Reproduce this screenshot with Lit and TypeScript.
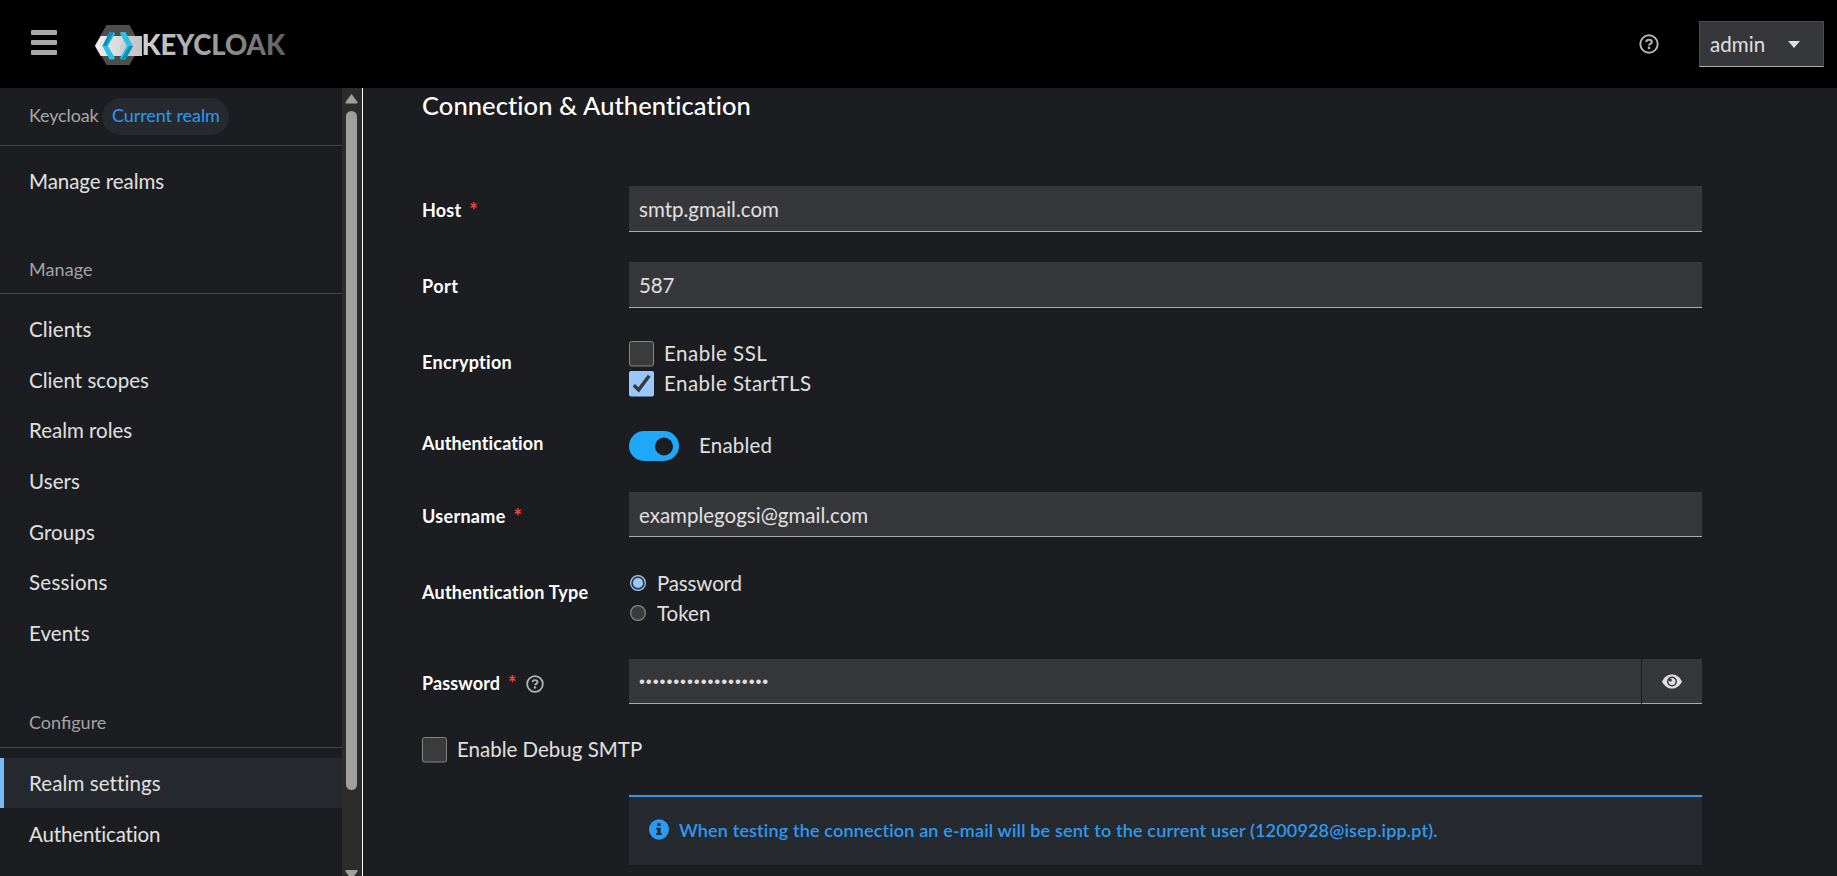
import { LitElement, html, svg, css, nothing } from 'lit';
import { customElement, property } from 'lit/decorators.js';
import { classMap } from 'lit/directives/class-map.js';

type Label = { text: string; track: number; active?: boolean };

const track = (n: number) => `letter-spacing:${n}px`;

const helpIcon = (size: number) => html`<svg width=${size} height=${size} viewBox="0 0 20 20">
  <circle cx="10" cy="10" r="8.7" fill="none" stroke="currentColor" stroke-width="2" />
  <path d="M7.200 8c.2-1.500 1.300-2.300 2.800-2.300 1.600 0 2.800.9 2.800 2.300 0 1.900-2.800 1.800-2.800 3.500" fill="none" stroke="currentColor" stroke-width="2.100" />
  <circle cx="10" cy="13.900" r="1.350" fill="currentColor" />
</svg>`;

@customElement('kc-masthead')
class Masthead extends LitElement {
  static styles = css`
    :host { display: flex; align-items: flex-start; height: 88px; background: #000; color: #e0e0e0; font-size: 20.5px; box-sizing: border-box; }
    .burger { display: flex; flex-direction: column; gap: 5px; width: 26px; padding: 30px 0 0; margin-left: 31px; }
    .burger i { height: 5px; background: #a9a9a9; border-radius: 1px; }
    .brand { display: flex; margin: 25px 0 0 38px; }
    .spacer { flex: 1; }
    .help { color: #b4b4b4; margin: 34px 40px 0 0; line-height: 0; }
    .user { display: flex; align-items: center; justify-content: space-between; width: 125px; height: 46px; margin: 21px 13px 0 0; padding: 0 23px 0 10px; box-sizing: border-box; background: #36373a; border: 1px solid #4a4b4e; border-bottom-color: #aaabac; }
    .user span:first-child { padding-bottom: 1px; }
    .caret { width: 0; height: 0; border: 6px solid transparent; border-top: 7px solid #e0e0e0; border-bottom: 0; }
    .word { font: 900 27.5px Lato, sans-serif; }
  `;
  render() {
    return html`
      <div class="burger"><i></i><i></i><i></i></div>
      <div class="brand">
        <svg width="192" height="40" viewBox="0 0 192 40">
          <defs>
            <linearGradient id="word" gradientUnits="userSpaceOnUse" x1="47" y1="0" x2="190" y2="0">
              <stop offset="0" stop-color="#d2d2d2" /><stop offset=".5" stop-color="#9c9c9c" /><stop offset="1" stop-color="#5e5e5e" />
            </linearGradient>
            <linearGradient id="band" x1="0" x2="1" y1="0" y2="0">
              <stop offset="0" stop-color="#efefef" /><stop offset="1" stop-color="#c6c6c6" />
            </linearGradient>
          </defs>
          <path d="M11.500 0h23L40.500 11 46 20 34.500 40h-23L0 20z" fill="#4d4d4d" />
          <path d="M5.700 11H47v20H5.700L0 21z" fill="url(#band)" />
          <path d="M25 21 31 11H47V23l-10 8H25z" fill="#bdbdbd" opacity=".35" />
          <path d="M14.500 7H19l1 1.500L13 21l7 12-1 1.500h-4.500L7.500 21z" fill="#2cc0e8" />
          <path d="M14.500 7H19L11.500 21h-4z" fill="#0992b8" />
          <path d="M26 7h4.500L38 21l-7.500 13.500H26L25 33l7-12-7-12.500z" fill="#2cc0e8" />
          <path d="M34 21h4l-7.500 13.500H26z" fill="#0992b8" />
          <text class="word" x="46.500" y="30.400" fill="url(#word)" textLength="143.500" lengthAdjust="spacing">KEYCLOAK</text>
        </svg>
      </div>
      <div class="spacer"></div>
      <div class="help">${helpIcon(20)}</div>
      <div class="user"><span style=${track(0.1)}>admin</span><span class="caret"></span></div>`;
  }
}

@customElement('kc-sidebar')
class Sidebar extends LitElement {
  static styles = css`
    :host { display: flex; width: 363px; height: 788px; overflow: hidden; box-sizing: border-box; border-right: 1px solid #fff; color: #e0e0e0; font-size: 20.5px; }
    nav { width: 342px; }
    .realm { display: flex; align-items: center; height: 58px; box-sizing: border-box; padding: 0 0 1px 29px; border-bottom: 1px solid #444548; font-size: 18px; color: #a8a8a8; }
    .pill { display: flex; align-items: center; height: 37px; width: 127px; box-sizing: border-box; padding: 0 0 3px 10px; margin-left: 3px; border-radius: 19px; background: #26292d; color: #2b9af3; white-space: nowrap; }
    .name { width: 70px; padding-bottom: 3px; }
    .group { display: flex; align-items: flex-end; box-sizing: border-box; border-bottom: 1px solid #444548; padding: 0 0 12px 29px; margin-bottom: 10px; line-height: 23px; font-size: 18px; color: #a3a3a3; height: 87px; }
    .group.lower { height: 89.300px; padding-bottom: 13px; }
    .item { display: flex; align-items: center; height: 50.700px; box-sizing: border-box; padding: 0 0 0 29px; }
    .item.active { height: 50px; margin-bottom: .700px; background: #26292d; border-left: 4px solid #73bcf7; padding-left: 25px; }
    .item.first { margin-top: 10px; padding-bottom: 1.500px; }
    .bar { width: 20px; background: #2c2c2c; display: flex; flex-direction: column; align-items: center; padding: 6px 1px 0 0; box-sizing: border-box; }
    .bar svg { flex: none; }
    .thumb { width: 11px; height: 679px; border-radius: 6px; background: #9f9f9f; margin: 7px 0 80px; flex: none; }
  `;
  top_: Label[] = [{ text: 'Manage realms', track: -0.05 }];
  manage: Label[] = [
    { text: 'Clients', track: 0.1 }, { text: 'Client scopes', track: 0.04 }, { text: 'Realm roles', track: -0.01 },
    { text: 'Users', track: 0.1 }, { text: 'Groups', track: 0.1 }, { text: 'Sessions', track: 0.28 }, { text: 'Events', track: 0.1 },
  ];
  configure: Label[] = [{ text: 'Realm settings', track: 0.1, active: true }, { text: 'Authentication', track: -0.15 }];
  items(list: Label[], first = false) {
    return list.map((l) => html`<div class=${classMap({ item: true, active: !!l.active, first })}><span style=${track(l.track)}>${l.text}</span></div>`);
  }
  render() {
    return html`
      <nav>
        <div class="realm"><span class="name" style=${track(-0.15)}>Keycloak</span><span class="pill" style=${track(-0.08)}>Current realm</span></div>
        ${this.items(this.top_, true)}
        <div class="group" style=${track(0.1)}>Manage</div>
        ${this.items(this.manage)}
        <div class="group lower" style=${track(0)}>Configure</div>
        ${this.items(this.configure)}
      </nav>
      <div class="bar">
        <svg width="13" height="10"><path d="M6.500 0 12.500 8Q13 9.500 11.500 9.500H1.500Q0 9.500 .500 8Z" fill="#9f9f9f" /></svg>
        <div class="thumb"></div>
        <svg width="13" height="10"><path d="M6.500 9.500 12.500 1.500Q13 0 11.500 0H1.500Q0 0 .500 1.500Z" fill="#9f9f9f" /></svg>
      </div>`;
  }
}

@customElement('kc-row')
class Row extends LitElement {
  @property() label = '';
  @property({ type: Number }) track = 0;
  @property({ type: Boolean }) required = false;
  @property({ type: Boolean }) help = false;
  static styles = css`
    :host { display: flex; width: 1280px; }
    .label { display: flex; align-items: flex-start; width: 207px; flex: none; color: #fff; font-size: 18px; font-weight: 700; line-height: 24px; white-space: nowrap; padding-top: var(--label-top, 12px); box-sizing: border-box; }
    .star { color: #f4463a; margin-left: 8px; line-height: 25px; font-weight: 700; font-size: 20px; }
    .help { color: #b4b4b4; margin: 4px 0 0 9px; line-height: 0; }
    .control { flex: 1; min-width: 0; }
  `;
  render() {
    return html`<div class="label"><span style=${track(this.track)}>${this.label}</span>
      ${this.required ? html`<span class="star">*</span>` : nothing}
      ${this.help ? html`<span class="help">${helpIcon(18)}</span>` : nothing}</div>
      <div class="control"><slot></slot></div>`;
  }
}

@customElement('app-root')
class AppRoot extends LitElement {
  static styles = css`
    :host { display: block; height: 876px; overflow: hidden; background: #1c1d21; color: #e0e0e0; font-family: Lato, "Open Sans", sans-serif; font-size: 20.5px; }
    .body { display: flex; height: 788px; }
    main { flex: 1; display: flex; flex-direction: column; padding: 2px 0 0 59px; box-sizing: border-box; overflow: hidden; }
    h1 { margin: 0 0 66px; font-size: 25.5px; font-weight: 500; line-height: 30px; color: #fff; }
    kc-row { flex: none; }
    .tall { height: 46px; margin-bottom: 30px; }
    .input { display: flex; align-items: center; height: 46px; box-sizing: border-box; background: #36373a; border-bottom: 1px solid #aaabac; padding: 1px 0 0 10px; }
    .short { height: 45px; }
    .enc { height: 57px; margin: 3px 0 33px; --label-top: 9px; }
    .auth { height: 30px; margin-bottom: 31px; --label-top: 0px; }
    .auth::part(label) { margin: 0; }
    .userrow { height: 45px; margin-bottom: 31px; --label-top: 12px; }
    .type { height: 62px; margin-bottom: 29px; --label-top: 12px; }
    .pass { height: 45px; --label-top: 12px; margin-bottom: 33px; }
    .opt { display: flex; align-items: center; height: 26px; line-height: 26px; }
    .opt + .opt { margin-top: 4px; }
    .opt span { margin-left: 10px; padding-bottom: 3px; }
    .opt svg { flex: none; }
    .radio { height: 30px; padding-left: 1px; }
    .radio + .radio { margin: 0; }
    .radio span { margin-left: 11px; padding-bottom: 0; }
    .switch { display: flex; align-items: center; height: 30px; }
    .switch span { margin-left: 20px; padding-bottom: 2px; }
    .group { display: flex; gap: 1px; }
    .group .input:first-child { flex: 1; }
    .group .eye { width: 60px; padding: 0; justify-content: center; }
    .dots { font: 17px "Liberation Sans", sans-serif; }
    .debug { margin: 0 0 32px 0; flex: none; }
    .debug span { padding-bottom: 2px; }
    .alert { display: flex; flex: none; width: 1073px; height: 70px; margin-left: 207px; box-sizing: border-box; padding: 22px 0 0 20px; background: #26292d; border-top: 2px solid #2b9af3; color: #2b9af3; font-size: 18px; line-height: 23px; }
    .alert span { margin-left: 10px; white-space: nowrap; font-weight: 600; }
  `;
  box(checked = false) {
    return html`<svg width="25" height="26" viewBox="0 0 25 26">${checked
      ? svg`<rect width="25" height="25.500" rx="2" fill="#99c8ff" /><path d="M4.800 14.200 9.700 18.800 20.200 4.800" fill="none" stroke="#3b3b3b" stroke-width="3.500" />`
      : svg`<rect x=".5" y=".5" width="24" height="24.500" rx="2" fill="#3b3b3b" stroke="#858585" />`}</svg>`;
  }
  radio(on = false) {
    return html`<svg width="16" height="16"><circle cx="8" cy="8" r="7.400" fill="#3b3b3b" stroke=${on ? '#99c8ff' : '#858585'} stroke-width="1.200" />
      ${on ? svg`<circle cx="8" cy="8" r="5" fill="#99c8ff" />` : nothing}</svg>`;
  }
  render() {
    return html`
      <kc-masthead></kc-masthead>
      <div class="body">
        <kc-sidebar></kc-sidebar>
        <main>
          <h1 style=${track(0.08)}>Connection &amp; Authentication</h1>
          <kc-row class="tall" label="Host" track="0.2" required><div class="input"><span style=${track(0.02)}>smtp.gmail.com</span></div></kc-row>
          <kc-row class="tall" label="Port" track="0.5"><div class="input"><span style=${track(-0.2)}>587</span></div></kc-row>
          <kc-row class="enc" label="Encryption" track="0.3">
            <div class="opt">${this.box()}<span style=${track(0.5)}>Enable SSL</span></div>
            <div class="opt">${this.box(true)}<span style=${track(0.48)}>Enable StartTLS</span></div>
          </kc-row>
          <kc-row class="auth" label="Authentication" track="0.14">
            <div class="switch">
              <svg width="50" height="30"><rect width="50" height="30" rx="15" fill="#1fa7f8" /><circle cx="35" cy="15.500" r="9" fill="#1c1d21" /></svg>
              <span style=${track(0.2)}>Enabled</span>
            </div>
          </kc-row>
          <kc-row class="userrow" label="Username" track="0.3" required><div class="input short"><span style=${track(0)}>examplegogsi@gmail.com</span></div></kc-row>
          <kc-row class="type" label="Authentication Type" track="0.22">
            <div class="opt radio">${this.radio(true)}<span style=${track(-0.15)}>Password</span></div>
            <div class="opt radio">${this.radio()}<span style=${track(0)}>Token</span></div>
          </kc-row>
          <kc-row class="pass" label="Password" track="0.12" required help>
            <div class="group">
              <div class="input short"><span class="dots" style=${track(0.9)}>•••••••••••••••••••</span></div>
              <div class="input short eye"><svg width="20" height="15" viewBox="0 0 20 15"><path d="M0 7.500C2.300 2.800 5.800.400 10 .400S17.700 2.800 20 7.500C17.700 12.200 14.200 14.600 10 14.600S2.300 12.200 0 7.500z" fill="#e0e0e0" /><circle cx="10" cy="7.500" r="5" fill="#36373a" /><circle cx="10" cy="7.500" r="3.500" fill="#e0e0e0" /><circle cx="8.400" cy="5.900" r="1.500" fill="#36373a" /></svg></div>
            </div>
          </kc-row>
          <div class="opt debug">${this.box()}<span style=${track(0)}>Enable Debug SMTP</span></div>
          <div class="alert">
            <svg width="20" height="21" viewBox="0 0 20 21"><ellipse cx="10" cy="10.500" rx="10" ry="10.300" fill="#2b9af3" /><path d="M8.300 4.200h3.300v2.900H8.300zM7.200 8.700h4.400v5.500h1.200v1.900H7.200v-1.900h1.200v-3.600H7.200z" fill="#26292d" /></svg>
            <span style=${track(0.16)}>When testing the connection an e-mail will be sent to the current user (1200928@isep.ipp.pt).</span>
          </div>
        </main>
      </div>`;
  }
}
